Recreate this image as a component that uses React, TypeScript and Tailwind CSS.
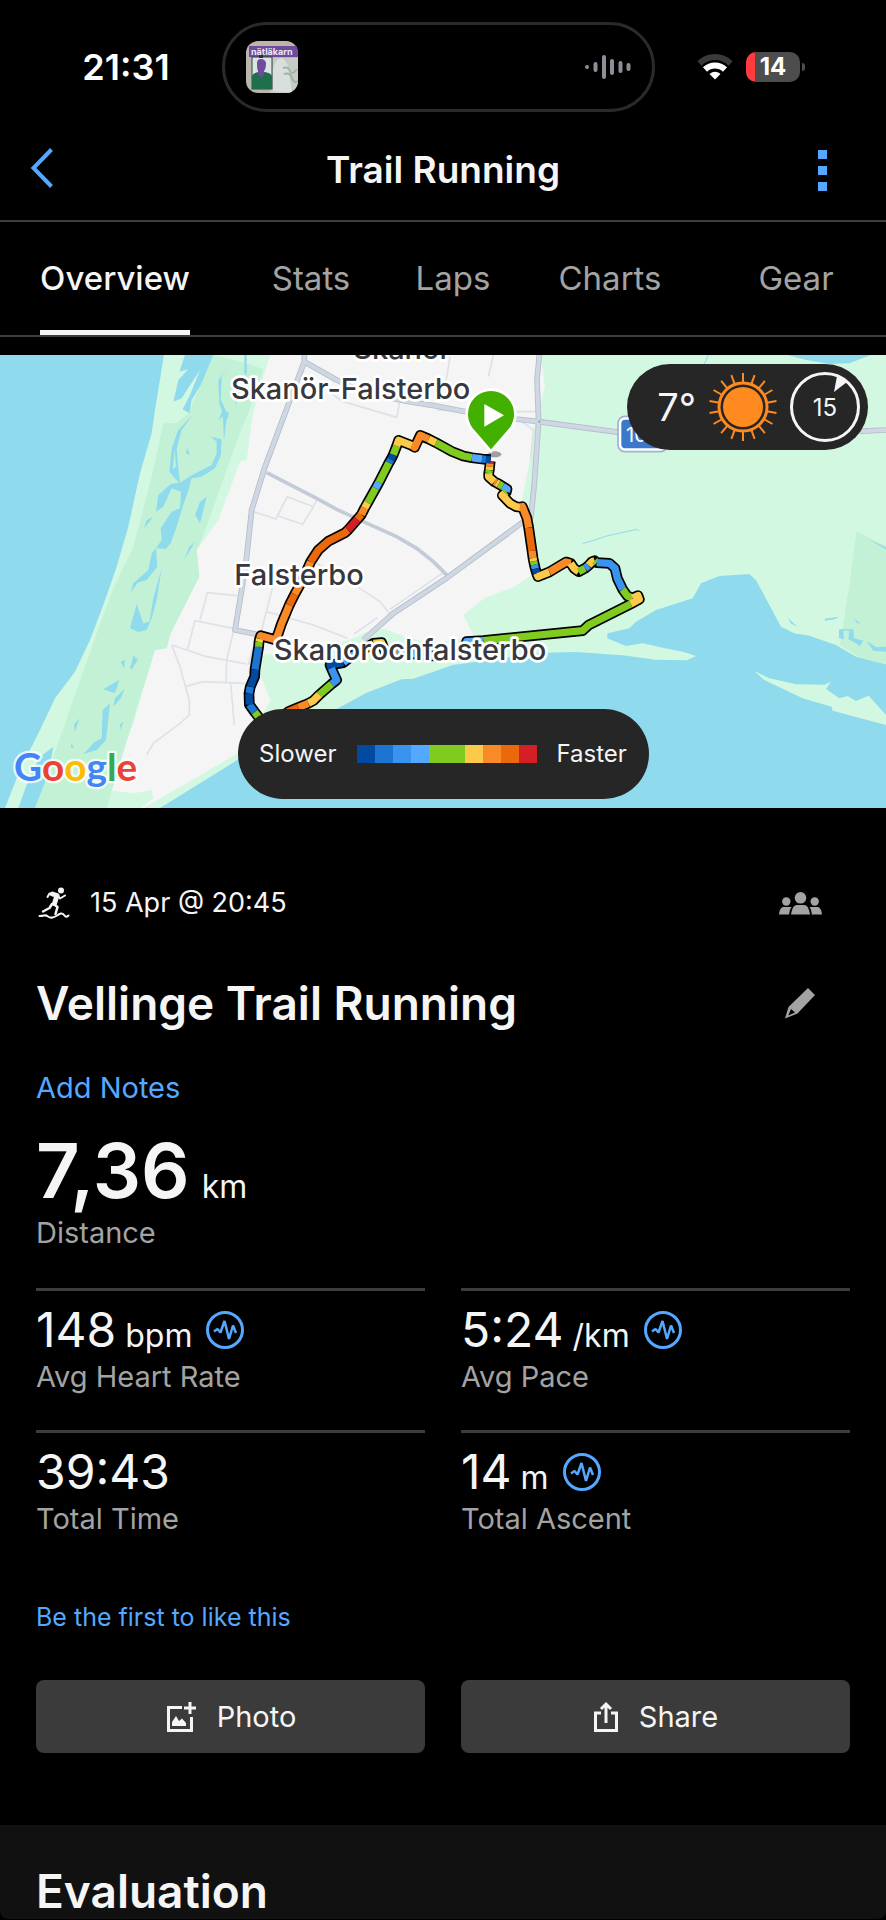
import { useState } from 'react';
import clsx from 'clsx';

const tabs = ['Overview', 'Stats', 'Laps', 'Charts', 'Gear'];

const stats = [
  { value: '148', unit: 'bpm', label: 'Avg Heart Rate', chart: true },
  { value: '5:24', unit: '/km', label: 'Avg Pace', chart: true },
  { value: '39:43', unit: '', label: 'Total Time', chart: false },
  { value: '14', unit: 'm', label: 'Total Ascent', chart: true },
];

// Pace colours, slowest to fastest
const NAVY = '#0249a0';
const BLUE = '#1b75d1';
const AZURE = '#3b93f0';
const SKY = '#55a8ff';
const GREEN = '#80cb20';
const YELLOW = '#fcca4a';
const ORANGE = '#f98a28';
const BURNT = '#ea690d';
const RED = '#d42024';

const scale = [NAVY, BLUE, AZURE, SKY, GREEN, GREEN, YELLOW, ORANGE, BURNT, RED];

// Each leg starts where the previous one ended
const route: [string, number[][]][] = [
  [RED, [[1471, 333], [1470, 340]]],
  [ORANGE, [[1469, 350]]],
  [YELLOW, [[1468, 360]]],
  [GREEN, [[1466, 370]]],
  [YELLOW, [[1466, 380], [1483, 395]]],
  [ORANGE, [[1489, 398]]],
  [YELLOW, [[1496, 402]]],
  [GREEN, [[1508, 409]]],
  [SKY, [[1521, 417], [1519, 426]]],
  [GREEN, [[1514, 430]]],
  [YELLOW, [[1507, 436], [1530, 460], [1548, 470], [1562, 472]]],
  [ORANGE, [[1567, 470], [1581, 505], [1586, 533]]],
  [BURNT, [[1596, 602]]],
  [ORANGE, [[1599, 624]]],
  [YELLOW, [[1601, 634]]],
  [GREEN, [[1603, 644]]],
  [AZURE, [[1606, 656]]],
  [NAVY, [[1610, 670]]],
  [YELLOW, [[1614, 680], [1648, 666]]],
  [ORANGE, [[1698, 636], [1712, 640]]],
  [YELLOW, [[1722, 655], [1736, 665]]],
  [GREEN, [[1755, 655]]],
  [AZURE, [[1766, 646]]],
  [YELLOW, [[1776, 635], [1784, 632]]],
  [GREEN, [[1790, 638]]],
  [AZURE, [[1828, 640], [1845, 655], [1852, 685], [1868, 718]]],
  [GREEN, [[1882, 738], [1898, 744]]],
  [YELLOW, [[1914, 737], [1918, 748], [1892, 762]]],
  [GREEN, [[1765, 826], [1748, 842], [1450, 872]]],
  [SKY, [[1400, 875], [1395, 905]]],
  [YELLOW, [[1370, 915]]],
  [SKY, [[1290, 918], [1190, 905]]],
  [YELLOW, [[1155, 905], [1145, 878], [1120, 880]]],
  [GREEN, [[1080, 905]]],
  [SKY, [[1055, 918], [1030, 938]]],
  [NAVY, [[990, 945], [994, 955]]],
  [AZURE, [[1000, 968], [1010, 990], [995, 1002]]],
  [GREEN, [[958, 1034]]],
  [YELLOW, [[940, 1052], [925, 1060]]],
  [ORANGE, [[895, 1072]]],
  [BURNT, [[865, 1085], [820, 1120]]],
  [GREEN, [[790, 1120], [764, 1086]]],
  [BLUE, [[748, 1064]]],
  [NAVY, [[747, 1030]]],
  [BLUE, [[751, 1010]]],
  [NAVY, [[764, 980], [765, 958]]],
  [BLUE, [[776, 890]]],
  [GREEN, [[777, 876]]],
  [YELLOW, [[779, 866]]],
  [ORANGE, [[782, 857], [828, 870], [845, 820], [868, 765]]],
  [BURNT, [[884, 733]]],
  [ORANGE, [[908, 690], [932, 635]]],
  [BURNT, [[955, 600], [985, 574], [1035, 548], [1044, 540]]],
  [RED, [[1072, 508]]],
  [BURNT, [[1084, 494]]],
  [ORANGE, [[1094, 474]]],
  [YELLOW, [[1103, 458]]],
  [GREEN, [[1127, 415]]],
  [SKY, [[1137, 397]]],
  [GREEN, [[1167, 338]]],
  [BLUE, [[1173, 328]]],
  [NAVY, [[1180, 314]]],
  [GREEN, [[1190, 288]]],
  [YELLOW, [[1196, 271], [1236, 287]]],
  [ORANGE, [[1244, 292], [1261, 256], [1286, 267]]],
  [YELLOW, [[1308, 278]]],
  [GREEN, [[1355, 304], [1390, 318], [1416, 323]]],
  [SKY, [[1446, 327]]],
  [BLUE, [[1458, 328]]],
  [NAVY, [[1472, 329]]],
];

const legs = route.map(([color, points], i) => {
  const prev = i > 0 ? route[i - 1][1] : null;
  const all = prev ? [prev[prev.length - 1], ...points] : points;
  return { color, points: all.map((p) => p.join(',')).join(' ') };
});
const outline = route.flatMap(([, points]) => points).map((p) => p.join(',')).join(' ');

const RouteMap = () => (
  <svg viewBox="0 15 2658 1359" className="block w-full" role="img" aria-label="Route map">
    <rect y="15" width="2658" height="1359" fill="#f5f5f5" />

    {/* West coast */}
    <path d="M492 15 810 15 775 130 757 200 740 330 720 335 655 510 590 600 598 680 512 850 500 895 465 900 400 1120 368 1200 325 1320 400 1330 455 1320 460 1345 425 1374 0 1374 0 15Z" fill="#d3f8e2" />
    <path d="M640 15 740 40 790 58 745 190 715 260 605 570 590 600 598 680 512 850 500 895 465 900 390 1140 320 1374 100 1374 160 1220 230 1020 290 850 340 715 400 590 455 380 490 218 528 220 565 190Z" fill="#c3f1d5" />
    <path d="M0 15 492 15 465 180 455 250 420 370 385 530 350 650 310 765 270 870 225 965 165 1045 120 1140 60 1260 15 1374 0 1374Z" fill="#90daee" />
    <g fill="#90daee">
      <path d="M555 15H640L605 100 575 150 568 190 548 178 570 135 600 60 545 145 520 155 535 90 565 58 538 65Z" />
      <path fillRule="evenodd" d="M578 195 545 240 530 295 534 345 540 402 508 365 515 295 535 240ZM524 300 528 350 518 358Z" />
      <path d="M632 260 665 268 662 318 645 355 605 380 575 385 565 422 548 470 530 530 512 580 497 597 468 595 485 570 482 535 515 485 540 475 543 425 515 415 490 470 468 485 475 435 512 402 540 398 575 376 635 345 650 310 650 275Z" />
      <path d="M468 595 472 650 440 690 412 698 392 730 400 700 445 660 455 610Z" />
      <path d="M700 30 665 75 662 150 682 190 672 270 668 190 658 160 655 90Z M655 212 668 178 688 190 680 210 672 195Z M620 440 600 520 585 495 600 455Z M460 500 432 535 440 510Z M585 575 552 630 568 590Z M562 295 570 315 558 310Z" />
      <path d="M485 655 470 750 455 805 440 840 415 846 390 835 410 762 430 820 448 815 460 745 475 690Z M415 920 395 960 390 950 402 935Z M362 935 375 930 372 955Z M400 915 413 932 392 958Z M358 990 345 1030 310 1018 340 1000Z M375 1015 362 1045 340 1070 345 1045Z" />
      <path d="M330 1060 318 1170 290 1200 250 1212 285 1175 305 1165 308 1080Z M238 1105 225 1145 222 1125Z M370 1115 362 1140 360 1122Z M215 1180 222 1195 212 1192Z M160 1190 145 1270 105 1374 55 1374 85 1290 120 1220Z" />
      <path d="M733 15H740V75L733 70Z M712 145 705 175 708 150Z" />
    </g>

    {/* South coast and the eastern reserve */}
    <path d="M430 1374 560 1300 720 1205 812 1052 785 985 765 930 800 912 900 920 1060 865 1100 845 1155 836 1215 862 1300 880 1423 860 1390 795 1453 745 1543 710 1603 670 1580 600 1560 480 1590 330 1600 240 1608 210 1635 110 1622 15H2658V1374Z" fill="#d3f8e2" />
    <path d="M480 1374 600 1300 720 1225 1010 1077 1100 1028 1205 988 1240 986 1358 945 1628 908 1728 906 1868 916 1968 929 2060 931 2088 918 2048 905 1988 893 1928 880 1878 888 1821 865 1823 850 1888 835 1908 815 1968 780 2078 745 2103 700 2158 678 2248 672 2268 690 2343 830 2383 850 2428 857 2508 885 2568 920 2658 943V1374Z" fill="#90daee" />
    <path d="M2363 15 2418 30 2488 42 2548 40 2613 15Z" fill="#90daee" />
    <path d="M2570 545 2658 588V943L2578 922 2520 886 2550 690Z" fill="#c3f1d5" />
    <path d="M2263 963 2308 985 2388 1003 2473 1004 2493 995 2478 1017 2518 1045 2543 1038 2568 1053 2606 1037 2658 1095V1125L2498 1082 2495 1070 2408 1045 2293 990Z" fill="#d3f8e2" />
    <g fill="#90daee">
      <path d="M2363 803 2392 830 2372 820Z M2475 806 2517 800 2505 808 2474 812Z M2562 805 2583 822 2570 818Z M2517 838H2560L2562 865 2590 872 2580 888 2560 875 2545 868 2548 842 2530 842 2532 868 2517 865Z M2600 873 2630 892 2658 890V905L2620 902Z M2602 566 2658 592V598Z" />
    </g>
    <path d="M1748 580 1778 572 1820 558 1910 538 1918 543M2125 15 2113 42" fill="none" stroke="#90daee" strokeWidth="3" />

    {/* Streets */}
    <g fill="none" stroke="#dde1e8" strokeWidth="5">
      <path d="M985 125 1030 155 1190 202 1200 150M862 440 940 470 908 523 832 497ZM760 485 828 507 842 480M950 450 935 480M600 810 622 728 712 737M562 900 585 812 700 835 900 880M515 885 620 920 740 942M700 845 680 930 678 1000M515 885 540 950 555 1005 568 1050 568 1095 540 1120 460 1180 440 1215M555 1010 610 995 735 1000M692 1000 703 1125M818 710 775 880M800 785 940 825 1042 865M1075 712 1140 755 1172 795M1170 778 1330 668M1062 852 1132 803M745 945 765 870M1350 20 1338 95M1480 15 1465 80M1310 180 1360 182M1545 185 1610 185M1560 210 1600 240 1592 330M950 640 1000 670" />
    </g>
    <path d="M800 368 950 445 1010 478 1090 515 1190 560 1250 595 1300 635 1345 680" fill="none" stroke="#c3cbd6" strokeWidth="11" />
    {['#b3bdcc', '#cfd7e2'].map((color, i) => (
      <g key={color} fill="none" stroke={color} strokeWidth={i ? 12 : 17} strokeLinejoin="round">
        <path d="M913 15V35L870 150 795 350 755 480 740 620 725 720 705 840 790 857" />
        <path d="M913 35 1010 90 1100 130 1228 155 1308 168 1398 185 1548 207 1616 215 1858 247 2000 255 2550 245 2658 240" />
        <path d="M1618 15 1611 90 1616 215 1603 400 1593 500 1568 517 1343 682 1180 790 1090 870" />
      </g>
    ))}
    <circle cx="1618" cy="215" r="4" fill="#9eabbd" />

    {/* Road shield */}
    <rect x="1854" y="199" width="148" height="106" rx="20" fill="#fff" stroke="#9db2d6" strokeWidth="5" />
    <rect x="1864" y="209" width="128" height="86" rx="12" fill="#3b78c9" />
    <text x="1878" y="275" fontSize="60" fill="#fff">100</text>

    {/* Route */}
    <polyline points={outline} fill="none" stroke="#000" strokeWidth="32" strokeLinejoin="round" />
    {legs.map((leg, i) => (
      <polyline key={i} points={leg.points} fill="none" stroke={leg.color} strokeWidth="22" strokeLinejoin="round" />
    ))}

    {/* Start pin */}
    <ellipse cx="1484" cy="313" rx="20" ry="9" fill="#000" opacity=".35" />
    <path d="M1473 304 1414 236A73 73 0 0 1 1400 192a73 73 0 0 1 146 0A73 73 0 0 1 1532 236Z" fill="#43b000" stroke="#fff" strokeWidth="8" />
    <path d="M1453 162 1512 196 1453 230Z" fill="#fff" />

    <g fontSize="87" fontWeight="500" fill="#37373d" stroke="#fff" strokeWidth="16" strokeLinejoin="round" paintOrder="stroke" textAnchor="middle">
      <text x="1206" y="28">Skanör</text>
      <text x="1052" y="147">Skanör-Falsterbo</text>
      <text x="897" y="705">Falsterbo</text>
      <text x="1230" y="930">Skanorochfalsterbo</text>
    </g>

    <text x="42" y="1294" className="font-[Lato]" fontSize="116" fontWeight="700" stroke="#fff" strokeOpacity=".8" strokeWidth="14" strokeLinejoin="round" paintOrder="stroke">
      <tspan fill="#4285f4">G</tspan>
      <tspan fill="#ea4335">o</tspan>
      <tspan fill="#fbbc05">o</tspan>
      <tspan fill="#4285f4">g</tspan>
      <tspan fill="#34a853">l</tspan>
      <tspan fill="#ea4335">e</tspan>
    </text>
  </svg>
);

const AlbumArt = () => (
  <svg viewBox="0 0 52 52" className="size-[52px] rounded-xl">
    <rect width="52" height="52" fill="#b9b6ab" />
    <path d="M27 17h25v35H24Z" fill="#c4ccc5" />
    <path d="M27 50V29c1-7 4-11 8-12 5 1 8 8 8 14l3 21Z" fill="#d9dfdc" />
    <path d="M37 27q5-2 7 3t7-2M38 33q6-2 8 4t6 3" fill="none" stroke="#9fb3a6" strokeWidth="2" />
    <rect x="3" y="5" width="49" height="11" fill="#6f4ba0" />
    <text x="5" y="14" fontSize="9" fontWeight="700" fill="#efe9f6">nätläkarn</text>
    <rect x="6" y="16" width="20" height="32" fill="#dde5e2" stroke="#2e4640" />
    <rect x="13" y="14" width="4" height="3" fill="#23332f" />
    <path d="M6 48V35q1-3 6-4h7q6 1 7 4v13Z" fill="#1f6e4c" />
    <path d="M11 22q0-4 4-4t5 4q0 6-2 8v3l-3 4-3-4v-3q-1-2-1-8Z" fill="#6f4ba0" />
  </svg>
);

const SoundWave = () => (
  <svg viewBox="0 0 46 26" className="h-[26px] w-[46px]" stroke="#8e8e99" strokeWidth="4" strokeLinecap="round">
    <path d="M2 13v.1M10.500 10v6M19 3v20M27 7v12M35.500 9v8M43.500 11v4" />
  </svg>
);

const Wifi = () => (
  <svg viewBox="0 0 36 27" className="h-[27px] w-9" fill="none">
    <path d="M2.500 10.500a22 22 0 0 1 31 0" stroke="#3a3a3a" strokeWidth="6" />
    <path d="M8 16.500a14.500 14.500 0 0 1 20 0" stroke="#fff" strokeWidth="6" />
    <path d="M12.500 21q5.500-4.500 11 0L18 26.500Z" fill="#fff" />
  </svg>
);

const ChartBadge = () => (
  <svg viewBox="0 0 38 38" className="size-[38px]" fill="none" stroke="#55a8ff">
    <circle cx="19" cy="19" r="17.500" strokeWidth="3" />
    <path d="M8 20.500 11.500 18 14.500 21.500 18.500 10 23 28 27 14.500 30 22" strokeWidth="2.500" strokeLinejoin="bevel" />
  </svg>
);

const TrailRunner = () => (
  <svg viewBox="0 0 32 32" className="size-8" fill="none" stroke="#f5f5f5" strokeLinecap="round" strokeLinejoin="round">
    <circle cx="23" cy="3.500" r="3" fill="#f5f5f5" stroke="none" />
    <path d="M14.500 7 19 8.500 16.500 16.500" strokeWidth="5" />
    <path d="M15 6.500 11.500 6.500 9.500 10M20 8.500 22 11.500 27 8.500" strokeWidth="2" />
    <path d="M15.500 17 19.500 20 17.500 27M14 17 11.500 21 5 24.500" strokeWidth="2.500" />
    <path d="M1.500 29Q4 29 6 28.500T10 29.500 14.500 30.500 19 28.500 23 26.500 26.500 28.500 30.500 28.500" strokeWidth="2" />
  </svg>
);

const People = () => (
  <svg viewBox="0 0 43 23" className="h-[23px] w-[43px]" fill="#a3a3a3">
    <circle cx="21.500" cy="5.800" r="5.800" />
    <circle cx="7.300" cy="9.500" r="4.200" />
    <circle cx="35.700" cy="9.500" r="4.200" />
    <path d="M12 22.500C13 16 15 13 18 13h7c3 0 5 3 6 9.500Z" />
    <path d="M0 22.500C.5 17.500 2 15 5 15h7.500C11 17 10.300 20 10.200 22.500Z" />
    <path d="M43 22.500C42.500 17.500 41 15 38 15h-7.500C32 17 32.700 20 32.800 22.500Z" />
  </svg>
);

const Pencil = () => (
  <svg viewBox="0 0 32 32" className="size-8" fill="#a3a3a3">
    <path fillRule="evenodd" d="M24 1 31 8 13.500 26.500 1 31.500 4.500 20ZM7 22 4.300 28.500 11 25.500Z" />
  </svg>
);

const PhotoIcon = () => (
  <svg viewBox="0 0 32 32" className="size-8" fill="none" stroke="#f5f5f5" strokeWidth="3">
    <path d="M17 6.500H3.500V29.500H26.500V16M25 1V13M19 7H31" />
    <path d="M7 25V21L11 15 14 20 17 17.500 21 22V25Z" fill="#f5f5f5" stroke="none" />
  </svg>
);

const ShareIcon = () => (
  <svg viewBox="0 0 26 32" className="h-8 w-[26px]" fill="none" stroke="#f5f5f5" strokeWidth="3">
    <path d="M8 12H2.500V29.500H23.500V12H18M13 22V4M8 8 13 3 18 8" />
  </svg>
);

const Sun = () => (
  <svg viewBox="0 0 70 70" className="size-[70px]" fill="none" stroke="#ff8a1f">
    <circle cx="35" cy="35" r="20" fill="#ff8a1f" stroke="none" />
    <circle cx="35" cy="35" r="24" strokeWidth="3" />
    {Array.from({ length: 18 }, (_, i) => (
      <path key={i} d="M35 1V11" strokeWidth="2" transform={`rotate(${i * 20} 35 35)`} />
    ))}
  </svg>
);

const App = () => {
  const [activeTab, setActiveTab] = useState('Overview');

  return (
    <div className="min-h-screen bg-black font-[Inter,sans-serif] text-neutral-100">
      {/* Status bar */}
      <div className="grid h-[120px] grid-cols-[222fr_433fr_231fr] items-center pt-[13px]">
        <span className="pl-[30px] text-center text-4xl font-semibold text-white">21:31</span>
        <div className="flex h-[90px] items-center justify-between rounded-full border-3 border-[#2a2a2a] px-[21px]">
          <AlbumArt />
          <SoundWave />
        </div>
        <div className="flex items-center gap-[13px] pl-[42px]">
          <Wifi />
          <div className="flex items-center gap-0.5">
            <div className="h-[30px] w-[54px] rounded-[10px] bg-linear-to-r from-[#ff3b40] from-17% to-[#4d4d4d] to-17% text-center text-2xl/[30px] font-bold text-white">
              14
            </div>
            <div className="h-2 w-[3px] rounded-r-full bg-[#4d4d4d]" />
          </div>
        </div>
      </div>

      <header className="flex h-[102px] items-center justify-between border-b-2 border-[#3d3d3d] px-[30px]">
        <button aria-label="Back" className="flex w-10 pb-1">
          <svg viewBox="0 0 24 40" className="h-10 w-6" fill="none" stroke="#55a8ff" strokeWidth="4">
            <path d="M21.500 1.500 3.500 20 21.500 38.500" />
          </svg>
        </button>
        <h1 className="text-[37px] font-semibold">Trail Running</h1>
        <button aria-label="More options" className="flex w-10 flex-col items-start gap-[7px] pl-0.5">
          <span className="size-[9px] bg-[#55a8ff]" />
          <span className="size-[9px] bg-[#55a8ff]" />
          <span className="size-[9px] bg-[#55a8ff]" />
        </button>
      </header>

      <nav className="grid h-[115px] grid-cols-[230fr_162fr_122fr_192fr_180fr] justify-items-center border-b-2 border-[#3d3d3d]">
        {tabs.map((tab) => (
          <button
            key={tab}
            onClick={() => setActiveTab(tab)}
            className={clsx(
              'border-b-5 pt-1.5 text-[33px]',
              activeTab === tab ? 'border-neutral-100 font-medium text-neutral-100' : 'border-transparent text-[#a3a3a3]'
            )}
          >
            {tab}
          </button>
        ))}
      </nav>

      {/* Map */}
      <section className="relative mt-[18px]">
        <RouteMap />
        <div className="absolute top-[9px] right-[18px] flex h-[86px] w-[241px] items-center justify-end gap-3 rounded-full bg-[#262626] pr-2">
          <span className="text-[38px]">7°</span>
          <Sun />
          <svg viewBox="0 0 70 70" className="size-[70px]">
            <circle cx="35" cy="35" r="33.500" fill="none" stroke="#f5f5f5" strokeWidth="3" />
            <path d="M47 4 57 10 44 20Z" fill="#f5f5f5" />
            <text x="35" y="44" fontSize="24" fill="#f5f5f5" textAnchor="middle">15</text>
          </svg>
        </div>
        <div className="absolute inset-x-0 bottom-[9px] mx-auto flex h-[90px] w-[411px] items-center justify-center gap-5 rounded-full bg-[#262626] text-2xl">
          <span>Slower</span>
          <div className="flex">
            {scale.map((color, i) => (
              <span key={i} className="size-[18px]" style={{ backgroundColor: color }} />
            ))}
          </div>
          <span>Faster</span>
        </div>
      </section>

      <main className="px-9">
        <div className="mt-[75px] flex h-10 items-center justify-between pr-7">
          <div className="flex items-center gap-5 pl-0.5 text-[27px]">
            <TrailRunner />
            <span>15 Apr @ 20:45</span>
          </div>
          <button aria-label="Privacy">
            <People />
          </button>
        </div>

        <div className="mt-12 flex h-16 items-center justify-between pr-[34px]">
          <h2 className="text-[46px]/[56px] font-semibold">Vellinge Trail Running</h2>
          <button aria-label="Edit name">
            <Pencil />
          </button>
        </div>

        <button className="mt-[33px] block text-[29px]/10 text-[#55a8ff]">Add Notes</button>

        <div className="mt-[22px]">
          <p className="flex items-baseline gap-3 text-[76px]/[80px] font-semibold">
            7,36
            <span className="text-[32px]/10 font-normal">km</span>
          </p>
          <p className="mt-[3px] text-[29px]/10 text-[#a3a3a3]">Distance</p>
        </div>

        <div className="mt-[35px] grid grid-cols-2 gap-x-9">
          {stats.map((stat) => (
            <div key={stat.label} className="border-t-3 border-[#3d3d3d] pt-[11px] pb-[34px]">
              <div className="flex h-14 items-center gap-[14px]">
                <p className="flex items-baseline gap-[9px] text-5xl/[56px]">
                  {stat.value}
                  {stat.unit && <span className="text-[32px]/10">{stat.unit}</span>}
                </p>
                {stat.chart && <ChartBadge />}
              </div>
              <p className="text-[29px]/[38px] text-[#a3a3a3]">{stat.label}</p>
            </div>
          ))}
        </div>

        <button className="mt-[27px] block text-[25px]/9 text-[#55a8ff]">Be the first to like this</button>

        <div className="mt-[45px] grid grid-cols-2 gap-9 text-[29px]">
          <button className="flex h-[73px] items-center justify-center gap-5 rounded-lg bg-[#3b3b3b]">
            <PhotoIcon />
            Photo
          </button>
          <button className="flex h-[73px] items-center justify-center gap-5 rounded-lg bg-[#3b3b3b]">
            <ShareIcon />
            Share
          </button>
        </div>
      </main>

      <section className="mt-[72px] rounded-b-lg bg-[#111] px-9 pt-[38px]">
        <h2 className="text-[46px]/[56px] font-semibold">Evaluation</h2>
      </section>
    </div>
  );
};

export default App;
